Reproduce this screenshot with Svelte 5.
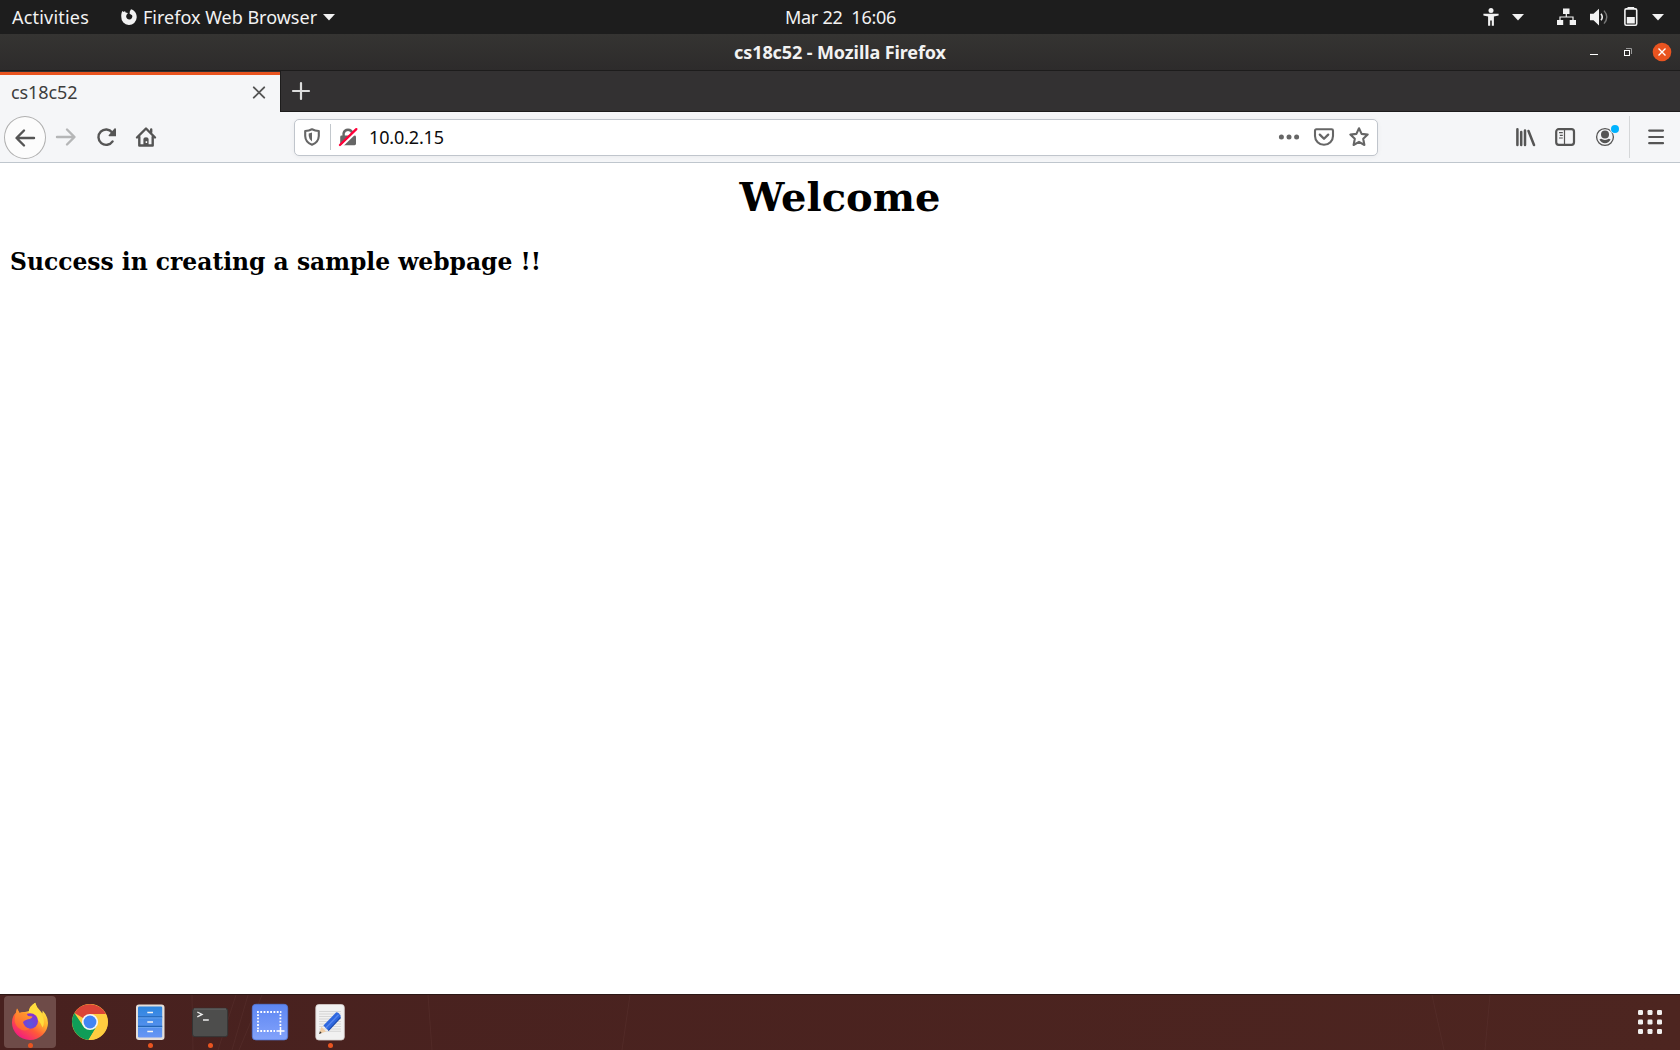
<script>
  const dots = [16.5, 26, 35.5];
</script>

<div class="desktop">
  <header class="topbar">
    <div class="side">
      <span class="t activities">Activities</span>
      <svg class="fx" width="18" height="18" viewBox="0 0 18 18">
        <path d="M2.4 3 3.8 4.1 5 3 5.6 4.6 8 5 6.6 6.8A3.1 3.1 0 1 0 12.1 7.2L9.6 5.8 9.8 3.4 11 1.2C15 2.6 17 5.8 16.7 9.6A7.7 7.7 0 0 1 1.3 9C1.1 6.5 1.5 4.5 2.4 3Z" fill="#f2f2f2" />
      </svg>
      <span class="t appname">Firefox Web Browser</span>
      <svg class="caret" width="12" height="24" viewBox="0 0 12 24"><path d="M0 9H12L6 15.5Z" fill="#f2f2f2" /></svg>
    </div>
    <span class="t clock">Mar 22&nbsp; 16:06</span>
    <div class="side status">
      <svg class="i" viewBox="0 0 24 24"><circle cx="12" cy="5.4" r="2.5" fill="#f2f2f2" /><path d="M4.4 8.8H19.6V10.6L14.9 11.4V20.7H12.8V15.5H11.2V20.7H9.1V11.4L4.4 10.6Z" fill="#f2f2f2" /></svg>
      <svg class="i g3" viewBox="0 0 24 24"><path d="M6 9H18L12 15.5Z" fill="#f2f2f2" /></svg>
      <svg class="i g24" viewBox="0 0 24 24"><path d="M9 3.5H15.5V9H9ZM3 15H9.2V20H3ZM15.7 15H22V20H15.7Z" fill="#f2f2f2" /><path d="M12.3 9V12M6 15V12H19V15" fill="none" stroke="#f2f2f2" stroke-width="1.2" /></svg>
      <svg class="i g9" viewBox="0 0 24 24"><path d="M3 8.8H6.5L12 3.8V20.4L6.5 15.3H3Z" fill="#f2f2f2" /><path d="M14 8.7Q16.5 12 14 15.3" fill="none" stroke="#eee" stroke-width="1.6" /><path d="M17 5.6Q22.6 12 17 18.6" fill="none" stroke="#777" stroke-width="1.4" /></svg>
      <svg class="i g8" viewBox="0 0 24 24"><rect x="5.9" y="3.9" width="11.8" height="16.3" rx="1.4" fill="none" stroke="#f2f2f2" stroke-width="1.6" /><path d="M8.5 2H15.2V4H8.5ZM7.8 12H15.8V18.4H7.8Z" fill="#f2f2f2" /></svg>
      <svg class="i g3" viewBox="0 0 24 24"><path d="M6 9H18L12 15.5Z" fill="#f2f2f2" /></svg>
    </div>
  </header>

  <div class="titlebar">
    <div class="side"></div>
    <span class="t title">cs18c52 - Mozilla Firefox</span>
    <div class="side controls">
      <svg class="i" viewBox="0 0 24 24"><path d="M8 14.5H16" stroke="#fff" /></svg>
      <svg class="i" viewBox="0 0 24 24"><path d="M10 8.5H15.5V14" fill="none" stroke="#999" /><rect x="8.5" y="10.5" width="5" height="5" fill="none" stroke="#fff" /></svg>
      <svg class="i" viewBox="0 0 24 24"><circle cx="12" cy="12" r="9.3" fill="#e95420" /><path d="M8.5 8.5 15.5 15.5M15.5 8.5 8.5 15.5" stroke="#fff" stroke-width="1.4" /></svg>
    </div>
  </div>

  <div class="tabs">
    <div class="tab">
      <span class="t tabname">cs18c52</span>
      <svg class="i" viewBox="0 0 24 24"><path d="M6.8 7.3 17.2 17.7M17.2 7.3 6.8 17.7" stroke="#555" stroke-width="1.9" stroke-linecap="round" /></svg>
    </div>
    <div class="newtab"><svg class="i" viewBox="0 0 24 24"><path d="M12 4V20M4 12H20" stroke="#ddd" stroke-width="2.2" stroke-linecap="round" /></svg></div>
  </div>

  <nav class="toolbar">
    <div class="back"><svg class="i" viewBox="0 0 24 24"><path d="M21 12H3.8M11 4.5 3.5 12 11 19.5" class="ln" /></svg></div>
    <svg class="i g8" viewBox="0 0 24 24"><path d="M3 12H20.2M13 4.5 20.5 12 13 19.5" class="ln dim" /></svg>
    <svg class="i g16" viewBox="0 0 24 24"><path d="M18.6 16.4A7.7 7.7 0 1 1 18.2 7.4" class="ln" /><path d="M20.7 3.2Q22 3 22 4.2V11.2H15.2Q14 11.2 14.8 10.1Z" fill="#555" /></svg>
    <svg class="i g16" viewBox="0 0 24 24"><path d="M3 12.5 12 3.5 21 12.5" class="ln" /><path d="M5.3 12V20.5H18.7V12M17.2 4.5V7" class="ln" /><path d="M9.4 20V14Q9.4 12.2 12 12.2T14.6 14V20Z" fill="#555" /><path d="M12.4 16.2V18" stroke="#fff" stroke-width="1.5" /></svg>
    <div class="url">
      <svg class="i" viewBox="0 0 24 24"><path d="M12 4.2Q15 5.8 18.8 6V11Q18.6 17.2 12 19.8 5.4 17.2 5.2 11V6Q9 5.8 12 4.2Z" fill="none" stroke="#666" stroke-width="2.1" stroke-linejoin="round" /><path d="M12 7.6V16.4Q9 14.6 8.7 11V8.4Q10.5 8.3 12 7.6Z" fill="#666" /></svg>
      <i class="bar"></i>
      <svg class="i" viewBox="0 0 24 24"><path d="M7.6 11V8.3A4.5 4.5 0 0 1 16.4 8.3V11" fill="none" stroke="#666" stroke-width="2.4" /><rect x="4.2" y="10.5" width="15.8" height="9.7" rx="1.4" fill="#666" /><path d="M5.3 21.4 21.8 5.4" stroke="#fff" stroke-width="2.4" /><path d="M4 20 20.3 4.2" stroke="#ff0039" stroke-width="2.4" stroke-linecap="round" /></svg>
      <span class="t address">10.0.2.15</span>
      <svg class="i" viewBox="0 0 24 24"><circle cx="4.4" cy="12" r="2.5" fill="#666" /><circle cx="12" cy="12" r="2.5" fill="#666" /><circle cx="19.6" cy="12" r="2.5" fill="#666" /></svg>
      <svg class="i g11" viewBox="0 0 24 24"><path d="M4.4 4.3H19.6Q21 4.3 21 5.7V11A9 8.8 0 0 1 3 11V5.7Q3 4.3 4.4 4.3Z" fill="none" stroke="#666" stroke-width="2.1" /><path d="M7.8 9.6 12 13.8 16.2 9.6" fill="none" stroke="#666" stroke-width="2.3" stroke-linecap="round" stroke-linejoin="round" /></svg>
      <svg class="i g11" viewBox="0 0 24 24"><path d="M12 3.3 14.6 8.9 20.7 9.6 16.2 13.8 17.4 20 12 16.9 6.6 20 7.8 13.8 3.3 9.6 9.4 8.9Z" fill="none" stroke="#666" stroke-width="2.1" stroke-linejoin="round" /></svg>
    </div>
    <svg class="i first" viewBox="0 0 24 24"><path d="M4.4 4.2V20M8.2 7V20M12 5.5V20M15.5 6 21 20" fill="none" stroke="#555" stroke-width="2.5" stroke-linecap="round" /></svg>
    <svg class="i g16" viewBox="0 0 24 24"><rect x="3.2" y="4.2" width="17.8" height="15.6" rx="2.5" fill="none" stroke="#555" stroke-width="2.2" /><path d="M11.5 4V20" stroke="#555" stroke-width="1.2" /><path d="M6 7.7H9.8M6.8 10.3H9.8M6 13H9.8" stroke="#555" stroke-width="1.2" /></svg>
    <svg class="i g16" viewBox="0 0 24 24"><circle cx="12" cy="12" r="8.4" fill="none" stroke="#555" stroke-width="1.3" /><circle cx="12" cy="9.4" r="4" fill="#555" /><path d="M6.4 14.5Q8.2 13.2 9.3 14.2 12 15.8 14.7 14.2 15.8 13.2 17.6 14.5 15.8 18.2 12 18.2T6.4 14.5Z" fill="#555" /><circle cx="22" cy="4" r="5" fill="#f5f6f7" /><circle cx="22" cy="4" r="4" fill="#00b3ff" /></svg>
    <i class="divider"></i>
    <svg class="i" viewBox="0 0 24 24"><path d="M5.2 5.6H19M5.2 12H19M5.2 18.2H19" stroke="#555" stroke-width="2.2" stroke-linecap="round" /></svg>
  </nav>

  <main>
    <h1>Welcome</h1>
    <h3>Success in creating a sample webpage !!</h3>
  </main>

  <footer class="dock">
    <svg class="lines" width="1680" height="55" viewBox="0 0 1680 55" aria-hidden="true"><path d="M192 0 193 55M236 0 218 55M248 0 232 55M262 0 239 55M428 0 432 55M1490 0 1485 55M1432 0 1444 55M630 0 622 55" /></svg>
    <div class="app active">
      <svg width="52" height="52" viewBox="0 0 52 52">
        <defs>
          <linearGradient id="fire" x1=".85" y1=".1" x2=".25" y2=".95"><stop offset="0" stop-color="#fff04a" /><stop offset=".35" stop-color="#ffb32c" /><stop offset=".65" stop-color="#ff5a38" /><stop offset="1" stop-color="#f21c80" /></linearGradient>
          <radialGradient id="globe" cx=".5" cy=".7" r=".7"><stop offset="0" stop-color="#5a58dd" /><stop offset="1" stop-color="#8c2fd0" /></radialGradient>
          <linearGradient id="fox" x1=".6" y1="0" x2=".2" y2="1"><stop offset="0" stop-color="#ffa22b" /><stop offset="1" stop-color="#ff5c35" /></linearGradient>
        </defs>
        <path d="M13 12.5 15.5 17Q18 15.5 21 16L25 15Q25 10.5 31.2 6.8 32.5 11.5 36 14.5L38.4 17.5 38.6 14.5Q44 20 44 27A18 17.2 0 0 1 8 26.5Q8 20 12 16.5Z" fill="url(#fire)" />
        <path d="M24.5 16.5Q25.5 10.5 31.2 6.8 32.2 11.8 37 17 42 25 38.5 31.5 35 22 24.5 16.5Z" fill="#ffdc3d" />
        <circle cx="26.2" cy="25" r="7.8" fill="url(#globe)" />
        <path d="M13 12.5 15.5 17Q19 16 22.5 17.5L24 20 28.5 20.5Q28 22.8 24 23.2 20 24.3 19 26 20 31 25.5 32.8 20 37 14 31.5 8.5 26 12 17Z" fill="url(#fox)" />
      </svg>
      <i class="run"></i>
    </div>
    <div class="app">
      <svg width="52" height="52" viewBox="0 0 52 52">
        <circle cx="26" cy="26" r="18" fill="#ffcd40" />
        <path d="M26 26 10.4 17A18 18 0 0 1 41.6 17.6L41.8 18H26Z" fill="#db4437" />
        <path d="M10.4 17 19.2 30 26 33.8 32.9 30 24.5 43.9A18 18 0 0 1 10.4 17Z" fill="#0f9d58" />
        <path d="M26 18H41.8A18 18 0 0 1 24.5 43.9L33 30Z" fill="#ffcd40" />
        <circle cx="26" cy="26" r="8.1" fill="#f5f5f5" /><circle cx="26" cy="26" r="6.4" fill="#4285f4" />
      </svg>
    </div>
    <div class="app">
      <svg width="52" height="52" viewBox="0 0 52 52">
        <defs><linearGradient id="cab" x1="0" y1="0" x2="0" y2="1"><stop offset="0" stop-color="#2d86df" /><stop offset="1" stop-color="#6795f5" /></linearGradient></defs>
        <rect x="12" y="8.5" width="28.5" height="35.5" rx="3" fill="#e5dfda" /><rect x="14" y="10.6" width="24.2" height="30.8" rx="1.2" fill="url(#cab)" />
        <path d="M14 20.8H38.2M14 30.4H38.2" stroke="#2265b5" stroke-width="1.2" /><path d="M14 21.9H38.2M14 31.5H38.2" stroke="#71aaf0" stroke-width=".8" />
        <path d="M23.3 16.5H29M23.3 26H29M23.3 35.5H29" stroke="#f4f4f4" stroke-width="1.5" />
      </svg>
      <i class="run"></i>
    </div>
    <div class="app">
      <svg width="52" height="52" viewBox="0 0 52 52">
        <rect x="8.5" y="12.3" width="35.2" height="28.4" rx="2.5" fill="#4d4d4c" stroke="#343434" /><path d="M10 13H42" stroke="#696969" />
        <path d="M13.3 16 18 18.4 13.3 20.8M19 24H24.8" fill="none" stroke="#eee" stroke-width="1.4" />
      </svg>
      <i class="run"></i>
    </div>
    <div class="app">
      <svg width="52" height="52" viewBox="0 0 52 52">
        <defs><linearGradient id="shot" x1="0" y1="0" x2="0" y2="1"><stop offset="0" stop-color="#5d86f2" /><stop offset="1" stop-color="#83a3fb" /></linearGradient></defs>
        <rect x="8.3" y="8.3" width="35.4" height="35.6" rx="3.5" fill="url(#shot)" stroke="#537ada" stroke-width=".8" />
        <path d="M13 16H37.4M13 35H31M14 18.2V34.5M36.4 18.2V30" fill="none" stroke="#fff" stroke-width="1.8" stroke-dasharray="1.8 1.5" />
        <path d="M36.5 31V39M32.5 35H40.5" stroke="#fff" stroke-width="1.5" />
      </svg>
    </div>
    <div class="app">
      <svg width="52" height="52" viewBox="0 0 52 52">
        <rect x="11.8" y="8.5" width="28.5" height="35.5" rx="3" fill="#f1f1f1" stroke="#d7d1ce" stroke-width=".8" />
        <path d="M15 15.5H37M15 18H37M15 20.5H37M15 23H37M15 25.5H37M15 28H37M15 30.5H37M15 33H37M15 35.3H37" stroke="#cfcfcf" stroke-width=".8" />
        <path d="M15 38 17.5 30.8 22 35.5Z" fill="#efcda6" /><path d="M15 38 16 35.3 17.7 37Z" fill="#333" />
        <path d="M19.4 29.6 32 16.5Q34 15.6 36.5 19.5V21.5L24.3 34.6Z" fill="#2e67df" /><path d="M21.8 32 34.5 18.8" stroke="#5586ed" stroke-width="1.4" /><path d="M24.3 34.6 36.5 21.5" stroke="#1848af" stroke-width="1.2" />
      </svg>
      <i class="run"></i>
    </div>
    <div class="app grid">
      <svg width="52" height="52" viewBox="0 0 52 52">
        {#each dots as y}{#each dots as x}<rect x={x - 2.5} y={y - 2.5} width="5" height="5" rx="1.2" fill="#f1efee" />{/each}{/each}
      </svg>
    </div>
  </footer>
</div>

<style>
  :global(body) { margin: 0; overflow: hidden; }
  .desktop { width: 1680px; height: 1050px; display: flex; flex-direction: column; background: #fff; overflow: hidden; }
  svg { display: block; flex: none; }
  .i { width: 24px; height: 24px; overflow: visible; }
  .t { font-family: "Noto Sans", "Open Sans", sans-serif; font-size: 18px; line-height: 24px; white-space: nowrap; color: #f2f2f2; }
  .g3 { margin-left: 3px; }
  .g8 { margin-left: 8px; }
  .g9 { margin-left: 9px; }
  .g11 { margin-left: 11px; }
  .g16 { margin-left: 16px; }
  .g24 { margin-left: 24px; }
  .side { display: flex; align-items: center; }
  .topbar, .titlebar { flex: none; display: grid; grid-template-columns: minmax(0, 1fr) auto minmax(0, 1fr); align-items: center; }
  .topbar { height: 34px; background: #1d1d1d; }
  .activities { width: 78px; margin-left: 12px; letter-spacing: .2px; }
  .fx { margin-left: 30px; }
  .appname { width: 174px; margin-left: 5px; }
  .caret { margin-left: 6px; }
  .clock { letter-spacing: -.25px; margin-left: 1px; }
  .status { justify-content: flex-end; padding-right: 10px; }
  .titlebar { height: 36px; background: linear-gradient(#353432, #2d2b2b); border-bottom: 1px solid #1d1c1c; }
  .title { font-weight: 700; letter-spacing: -.1px; }
  .controls { justify-content: flex-end; gap: 10px; padding-right: 6px; }
  .tabs { height: 41px; flex: none; display: flex; background: #333132; }
  .tab { width: 280px; box-sizing: border-box; display: flex; align-items: center; justify-content: space-between; padding: 0 9px 3px 11px; border-top: 3px solid #e95420; background: #f5f6f8; margin-top: 1px; }
  .tabname { color: #3d3d3d; letter-spacing: -.1px; }
  .newtab { flex: 1; display: flex; align-items: center; padding-left: 8px; border-left: 1px solid #1d1c1c; border-bottom: 1px solid #1d1c1c; }
  .toolbar { height: 50px; flex: none; display: flex; align-items: center; padding: 0 12px 0 4px; background: #f5f6f8; border-bottom: 1px solid #bfc6cd; }
  .back { width: 42px; height: 43px; margin-top: 1px; box-sizing: border-box; border: 1px solid #b0b0b0; border-radius: 50%; background: #fcfcfc; display: grid; place-items: center; }
  .ln { fill: none; stroke: #555; stroke-width: 2.4; stroke-linecap: round; stroke-linejoin: round; }
  .dim { stroke: #b5b6b7; }
  .url { width: 1084px; height: 37px; box-sizing: border-box; margin: 1px 0 0 136px; padding: 0 6px 1px 5px; border: 1px solid #c0c5cc; border-radius: 5px; background: #fff; box-shadow: 0 1px 5px #0000000d; display: flex; align-items: center; }
  .bar { width: 1px; height: 26px; margin: 0 5px 0 6px; background: #c2c7cc; }
  .address { flex: 1; margin-left: 9px; color: #0c0c0d; letter-spacing: -.15px; }
  .first { margin-left: auto; }
  .divider { width: 1px; height: 42px; margin: 0 14px 0 12px; background: #d5d7d9; }
  main { flex: 1; padding: 10px; font-family: "DejaVu Serif", serif; font-size: 20px; color: #000; }
  h1 { margin: 0; font-size: 40px; line-height: 47px; text-align: center; }
  h3 { margin: 28px 0 0; font-size: 23.4px; line-height: 28px; }
  .dock { height: 53px; flex: none; display: flex; align-items: center; gap: 8px; padding: 0 4px 2px; border-top: 1px solid #2c1715; background: linear-gradient(90deg, #48211f, #4d2520); position: relative; }
  .lines { position: absolute; left: 0; top: 0; stroke: #5c3431; stroke-width: 1; opacity: .45; fill: none; }
  .app { width: 52px; height: 52px; position: relative; border-radius: 4px; }
  .active { background: #6e4b48; }
  .run { position: absolute; left: 23.5px; bottom: 0; width: 5px; height: 5px; border-radius: 50%; background: #e95420; }
  .grid { margin-left: auto; }
</style>
